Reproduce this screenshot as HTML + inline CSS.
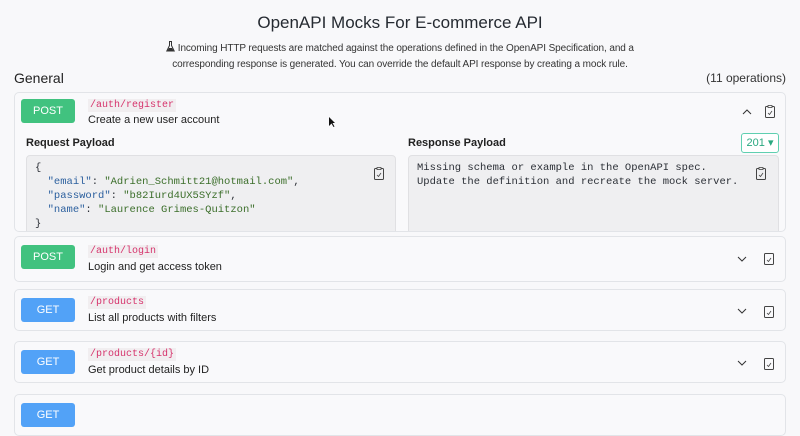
<!DOCTYPE html>
<html><head><meta charset="utf-8"><style>
*{box-sizing:border-box;margin:0;padding:0}
body{width:800px;height:406px;overflow:hidden;background:#f8f8fa;font-family:"Liberation Sans",sans-serif;color:#2b2f36;position:relative}
.abs{position:absolute}
h1{position:absolute;top:13px;left:0;width:800px;text-align:center;font-size:17px;font-weight:normal;color:#252a31}
.sub{position:absolute;top:41px;left:90px;width:620px;text-align:center;font-size:10px;line-height:16px;color:#333;letter-spacing:-0.1px}
.card{position:absolute;left:14px;width:772px;background:#f9f9fb;border:1px solid #e2e4e8;border-radius:5px;overflow:hidden}
.badge{position:absolute;left:6px;width:54px;height:24px;border-radius:3px;color:#fff;font-size:11px;text-align:center;line-height:24px}
.post{background:#41c27f}.get{background:#52a2f7}
.path{position:absolute;left:73px;font-family:"Liberation Mono",monospace;font-size:10px;color:#d6336c;background:#f1eef0;padding:1px 2px}
.desc{position:absolute;left:73px;font-size:11px;color:#222}
.code{position:absolute;background:#efeff1;border:1px solid #e0e0e3;border-radius:4px;font-family:"Liberation Mono",monospace;font-size:10.5px;line-height:14px;padding:5px 8px;white-space:pre}
.k{color:#2b5f9e}.s{color:#3b6e2a}
.lbl{position:absolute;font-size:11px;font-weight:bold;color:#222}
</style></head><body>
<h1>OpenAPI Mocks For E-commerce API</h1>
<div class="sub"><svg width="9" height="11" viewBox="0 0 9 11" style="vertical-align:-1px"><path d="M3 0.5h3M3.5 0.5v4L0.8 10h7.4L5.5 4.5v-4" fill="none" stroke="#333"/><path d="M1.5 9.5L3 7h3l1.5 2.5z" fill="#333"/></svg> Incoming HTTP requests are matched against the operations defined in the OpenAPI Specification, and a<br>corresponding response is generated. You can override the default API response by creating a mock rule.</div>
<div class="abs" style="left:14px;top:70px;font-size:14px;color:#222">General</div>
<div class="abs" style="right:14px;top:71px;font-size:12px;color:#333">(11 operations)</div>

<div class="card" style="top:92px;height:140px">
 <div class="badge post" style="top:6px">POST</div>
 <div class="path" style="top:6px">/auth/register</div>
 <div class="desc" style="top:21px">Create a new user account</div>
 <svg class="abs" style="left:727px;top:16px" width="10" height="6"><path d="M1 5l4-4 4 4" fill="none" stroke="#333"/></svg>
 <svg class="abs" style="left:750px;top:12px" width="10" height="13"><rect x="0.5" y="1.5" width="9" height="11" rx="1" fill="none" stroke="#444"/><rect x="3" y="0.5" width="4" height="2" fill="#fff" stroke="#444" stroke-width=".8"/><path d="M3 8l1.5 1.5L7 6" fill="none" stroke="#444" stroke-width=".8"/></svg>
 <div class="lbl" style="left:11px;top:44px">Request Payload</div>
 <div class="lbl" style="left:393px;top:44px">Response Payload</div>
 <div class="abs" style="left:726px;top:40px;width:38px;height:20px;border:1px solid #5fcfb0;border-radius:3px;color:#2aa880;font-size:11px;line-height:18px;text-align:center;background:#fff">201 ▾</div>
 <div class="code" style="left:11px;top:62px;width:370px;height:90px">{
  <span class="k">"email"</span>: <span class="s">"Adrien_Schmitt21@hotmail.com"</span>,
  <span class="k">"password"</span>: <span class="s">"b82Iurd4UX5SYzf"</span>,
  <span class="k">"name"</span>: <span class="s">"Laurence Grimes-Quitzon"</span>
}</div>
 <div class="code" style="left:393px;top:62px;width:371px;height:90px">Missing schema or example in the OpenAPI spec.
Update the definition and recreate the mock server.</div>
 <svg class="abs" style="left:359px;top:74px" width="10" height="13"><rect x="0.5" y="1.5" width="9" height="11" rx="1" fill="none" stroke="#444"/><rect x="3" y="0.5" width="4" height="2" fill="#efeff1" stroke="#444" stroke-width=".8"/><path d="M3 8l1.5 1.5L7 6" fill="none" stroke="#444" stroke-width=".8"/></svg>
 <svg class="abs" style="left:741px;top:74px" width="10" height="13"><rect x="0.5" y="1.5" width="9" height="11" rx="1" fill="none" stroke="#444"/><rect x="3" y="0.5" width="4" height="2" fill="#efeff1" stroke="#444" stroke-width=".8"/><path d="M3 8l1.5 1.5L7 6" fill="none" stroke="#444" stroke-width=".8"/></svg>
</div>
<svg class="abs" style="left:328px;top:116px" width="8" height="12"><path d="M1 1v9l2.5-2.5 2 3.5 1-.5-2-3.5H7z" fill="#111"/></svg>

<div class="card" style="top:236px;height:46px">
 <div class="badge post" style="top:8px">POST</div>
 <div class="path" style="top:8px">/auth/login</div>
 <div class="desc" style="top:24px">Login and get access token</div>
</div>
<div class="card" style="top:289px;height:42px">
 <div class="badge get" style="top:8px">GET</div>
 <div class="path" style="top:6px">/products</div>
 <div class="desc" style="top:22px">List all products with filters</div>
</div>
<div class="card" style="top:341px;height:42px">
 <div class="badge get" style="top:8px">GET</div>
 <div class="path" style="top:6px">/products/{id}</div>
 <div class="desc" style="top:22px">Get product details by ID</div>
</div>
<div class="card" style="top:394px;height:42px">
 <div class="badge get" style="top:8px">GET</div>
</div>
<svg class="abs" style="left:0;top:0" width="800" height="406">
 <g fill="none" stroke="#333">
  <path d="M738 257l4 4 4-4"/><path d="M738 309l4 4 4-4"/><path d="M738 361l4 4 4-4"/>
 </g>
 <g fill="none" stroke="#444">
  <rect x="764.5" y="253.5" width="9" height="11" rx="1"/><rect x="764.5" y="306.5" width="9" height="11" rx="1"/><rect x="764.5" y="358.5" width="9" height="11" rx="1"/>
  <path d="M767 260l1.5 1.5L771 258M767 313l1.5 1.5L771 311M767 365l1.5 1.5L771 363" stroke-width=".8"/>
 </g>
</svg>
</body></html>
